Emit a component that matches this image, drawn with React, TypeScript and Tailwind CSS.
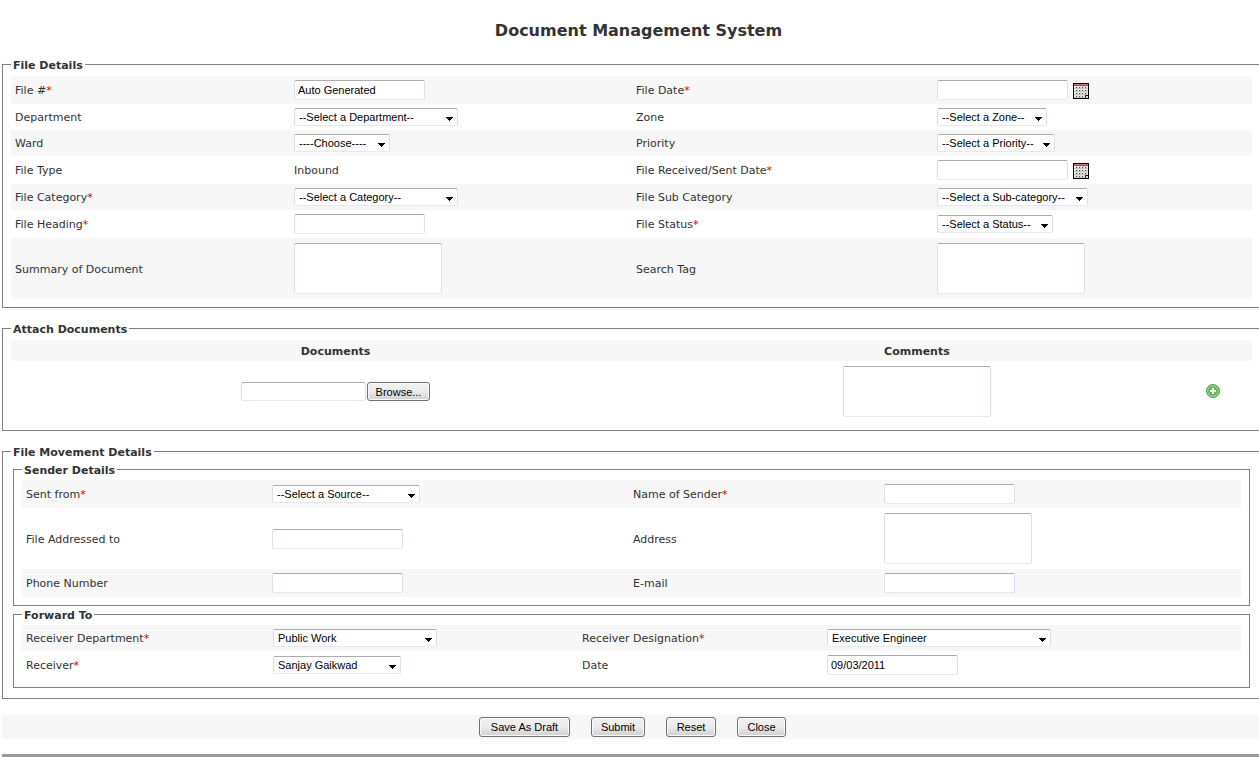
import { useId } from "react";
import type { ReactNode } from "react";

const box =
  "rounded-[2px] border border-[#dbdfe6] border-t-[#abadb3] border-b-[#e3e9ef] bg-white text-[11px] text-black font-['Liberation_Sans',Arial,sans-serif] outline-none focus:border-[#5794bf]";

const fileCols = "grid-cols-[279fr_342fr_301fr_319fr]";
const senderCols = "grid-cols-[246fr_361fr_251fr_361fr]";
const forwardCols = "grid-cols-[247fr_309fr_245fr_418fr]";

function TextBox({ id, value, width = "w-[131px]" }: { id?: string; value?: string; width?: string }) {
  return <input id={id} type="text" defaultValue={value} className={`${box} ${width} block h-5 px-[3px]`} />;
}

function Area({ id, label }: { id?: string; label?: string }) {
  return <textarea id={id} aria-label={label} className={`${box} block h-[51px] w-[148px] resize-none px-1`} />;
}

function Select({ id, value, width }: { id?: string; value: string; width: string }) {
  return (
    <span className={`relative block h-[18px] max-w-full ${width}`}>
      <select id={id} className={`${box} block h-full w-full appearance-none pr-4 pl-1 leading-4`}>
        <option>{value}</option>
      </select>
      <svg viewBox="0 0 7 4" shapeRendering="crispEdges" className="pointer-events-none absolute right-[5px] bottom-[5px] h-1 w-[7px]">
        <path d="M0 0h7v1H0zM1 1h5v1H1zM2 2h3v1H2zM3 3h1v1H3z" fill="#000" />
      </svg>
    </span>
  );
}

const dots = [0, 1, 2, 3].flatMap((r) => [0, 1, 2, 3].map((c) => ({ x: 3 + c * 3, y: 4 + r * 3 })));

function DateBox({ id }: { id?: string }) {
  return (
    <span className="flex items-center gap-[5px]">
      <TextBox id={id} />
      <button type="button" aria-label="Pick a date" className="mt-[2px] size-4">
        <svg viewBox="0 0 16 16" shapeRendering="crispEdges" className="size-4">
          <path d="M0 0h16v16H0z" fill="#000" />
          <path d="M1 1h14v2H1z" fill="#a8454c" />
          <path d="M1 1h14v1H1z" fill="#d07a7e" />
          <path d="M1 3h14v12H1z" fill="#ececec" />
          <path d="M1 5h14v1H1zM1 8h14v1H1zM1 11h14v1H1zM1 14h14v1H1z" fill="#c4c2c2" />
          <path d="M4 3h1v12H4zM7 3h1v12H7zM10 3h1v12h-1zM13 3h1v12h-1z" fill="#cfcdcd" />
          {dots.map((d) => (
            <rect key={`${d.x}-${d.y}`} x={d.x} y={d.y} width="1" height="1" fill="#4a4646" />
          ))}
          <path d="M12 12h3v3h-3z" fill="#222" />
          <path d="M13 13h2v2h-2z" fill="#ddd" />
        </svg>
      </button>
    </span>
  );
}

function Field({ label, required, children }: { label: string; required?: boolean; children: (id: string) => ReactNode }) {
  const id = useId();
  return (
    <>
      <label htmlFor={id} className="min-w-0 px-1 pt-[2px]">
        {label}
        {required && <span className="text-[#dd0000]">*</span>}
      </label>
      <div className="min-w-0 px-1">{children(id)}</div>
    </>
  );
}

function Row({ cols, height = "min-h-[28px]", shaded, children }: { cols: string; height?: string; shaded?: boolean; children: ReactNode }) {
  return <div className={`grid items-center ${cols} ${height} ${shaded ? "bg-[#f7f7f7]" : ""}`}>{children}</div>;
}

const short = "min-h-[26px]";
const tall = "min-h-[61px]";

function Section({ title, className, children }: { title: string; className: string; children: ReactNode }) {
  return (
    <fieldset className={`min-w-0 border border-[#808080] pl-2 ${className}`}>
      <legend className="px-[2px] pt-[3px] leading-[14px] font-bold">{title}</legend>
      {children}
    </fieldset>
  );
}

function PushButton({ children, type = "button", className }: { children: ReactNode; type?: "button" | "submit" | "reset"; className: string }) {
  return (
    <button
      type={type}
      className={`rounded-[3px] border border-[#707070] bg-linear-to-b from-[#f2f2f2] from-0% via-[#ebebeb] via-50% to-[#cfcfcf] font-['Liberation_Sans',Arial,sans-serif] text-[11px] leading-4 whitespace-nowrap text-black shadow-[inset_0_0_0_1px_#fafafa] ${className}`}
    >
      {children}
    </button>
  );
}

export default function App() {
  return (
    <form
      onSubmit={(e) => e.preventDefault()}
      className="overflow-x-hidden bg-white pl-[2px] font-['DejaVu_Sans',Verdana,sans-serif] text-[11px] leading-[14px] text-[#333]"
    >
      <h1 className="pt-[21px] pb-[15px] pl-4 text-center text-[16px] leading-5 font-bold">Document Management System</h1>

      <Section title="File Details" className="border-r-0 pt-[3px] pr-[7px] pb-2">
        <Row cols={fileCols} shaded>
          <Field label="File #" required>{(id) => <TextBox id={id} value="Auto Generated" />}</Field>
          <Field label="File Date" required>{(id) => <DateBox id={id} />}</Field>
        </Row>
        <Row cols={fileCols} height={short}>
          <Field label="Department">{(id) => <Select id={id} value="--Select a Department--" width="w-[164px]" />}</Field>
          <Field label="Zone">{(id) => <Select id={id} value="--Select a Zone--" width="w-[110px]" />}</Field>
        </Row>
        <Row cols={fileCols} height={short} shaded>
          <Field label="Ward">{(id) => <Select id={id} value="----Choose----" width="w-[96px]" />}</Field>
          <Field label="Priority">{(id) => <Select id={id} value="--Select a Priority--" width="w-[118px]" />}</Field>
        </Row>
        <Row cols={fileCols}>
          <Field label="File Type">{(id) => <output id={id} className="block pt-[2px]">Inbound</output>}</Field>
          <Field label="File Received/Sent Date" required>{(id) => <DateBox id={id} />}</Field>
        </Row>
        <Row cols={fileCols} height={short} shaded>
          <Field label="File Category" required>{(id) => <Select id={id} value="--Select a Category--" width="w-[164px]" />}</Field>
          <Field label="File Sub Category">{(id) => <Select id={id} value="--Select a Sub-category--" width="w-[151px]" />}</Field>
        </Row>
        <Row cols={fileCols}>
          <Field label="File Heading" required>{(id) => <TextBox id={id} />}</Field>
          <Field label="File Status" required>{(id) => <Select id={id} value="--Select a Status--" width="w-[116px]" />}</Field>
        </Row>
        <Row cols={fileCols} height={tall} shaded>
          <Field label="Summary of Document">{(id) => <Area id={id} />}</Field>
          <Field label="Search Tag">{(id) => <Area id={id} />}</Field>
        </Row>
      </Section>

      <Section title="Attach Documents" className="mt-3 border-r-0 pt-[3px] pr-[7px] pb-2">
        <table className="w-full table-fixed">
          <thead>
            <tr className="h-[21px] bg-[#f7f7f7]">
              <th className="w-[52.3%] p-0 pt-[2px]">Documents</th>
              <th className="w-[41.4%] p-0 pt-[2px]">Comments</th>
              <td className="p-0" />
            </tr>
          </thead>
          <tbody>
            <tr className="h-[61px]">
              <td className="p-0">
                <div className="flex justify-center gap-px">
                  <input type="text" aria-label="Document file" className={`${box} h-[19px] w-[125px] px-1`} />
                  <PushButton className="h-[19px] w-[63px]">Browse...</PushButton>
                </div>
              </td>
              <td className="p-0">
                <div className="flex justify-center">
                  <Area label="Comments" />
                </div>
              </td>
              <td className="p-0 pb-[2px]">
                <button type="button" aria-label="Add document" className="mx-auto block size-[14px]">
                  <svg viewBox="0 0 14 14" className="size-[14px]">
                    <circle cx="7" cy="7" r="6.5" fill="#6dbb5c" stroke="#4f9f52" />
                    <circle cx="7" cy="7" r="5.3" fill="#67b657" stroke="#a5d998" strokeWidth="0.9" />
                    <path d="M6 4h2v2h2v2H8v2H6V8H4V6h2z" fill="#fff" />
                  </svg>
                </button>
              </td>
            </tr>
          </tbody>
        </table>
      </Section>

      <Section title="File Movement Details" className="mt-3 border-r-0 pt-px pr-[7px] pb-[10px]">
        <div className="px-[2px]">
          <Section title="Sender Details" className="pt-[2px] pr-2 pb-2">
            <Row cols={senderCols} shaded>
              <Field label="Sent from" required>{(id) => <Select id={id} value="--Select a Source--" width="w-[148px]" />}</Field>
              <Field label="Name of Sender" required>{(id) => <TextBox id={id} />}</Field>
            </Row>
            <Row cols={senderCols} height={tall}>
              <Field label="File Addressed to">{(id) => <TextBox id={id} />}</Field>
              <Field label="Address">{(id) => <Area id={id} />}</Field>
            </Row>
            <Row cols={senderCols} shaded>
              <Field label="Phone Number">{(id) => <TextBox id={id} />}</Field>
              <Field label="E-mail">{(id) => <TextBox id={id} />}</Field>
            </Row>
          </Section>
          <Section title="Forward To" className="pt-[2px] pr-2 pb-2">
            <Row cols={forwardCols} height={short} shaded>
              <Field label="Receiver Department" required>{(id) => <Select id={id} value="Public Work" width="w-[164px]" />}</Field>
              <Field label="Receiver Designation" required>{(id) => <Select id={id} value="Executive Engineer" width="w-[224px]" />}</Field>
            </Row>
            <Row cols={forwardCols}>
              <Field label="Receiver" required>{(id) => <Select id={id} value="Sanjay Gaikwad" width="w-[128px]" />}</Field>
              <Field label="Date">{(id) => <TextBox id={id} value="09/03/2011" />}</Field>
            </Row>
          </Section>
        </div>
      </Section>

      <div className="mt-4 flex h-6 items-center justify-center gap-[21px] bg-[#f7f7f7] pl-1">
        <PushButton className="h-5 w-[91px]">Save As Draft</PushButton>
        <PushButton type="submit" className="h-5 w-[54px]">Submit</PushButton>
        <PushButton type="reset" className="h-5 w-[50px]">Reset</PushButton>
        <PushButton className="h-5 w-[49px]">Close</PushButton>
      </div>
      <div className="mt-[15px] h-[3px] bg-[#999]" />
    </form>
  );
}
